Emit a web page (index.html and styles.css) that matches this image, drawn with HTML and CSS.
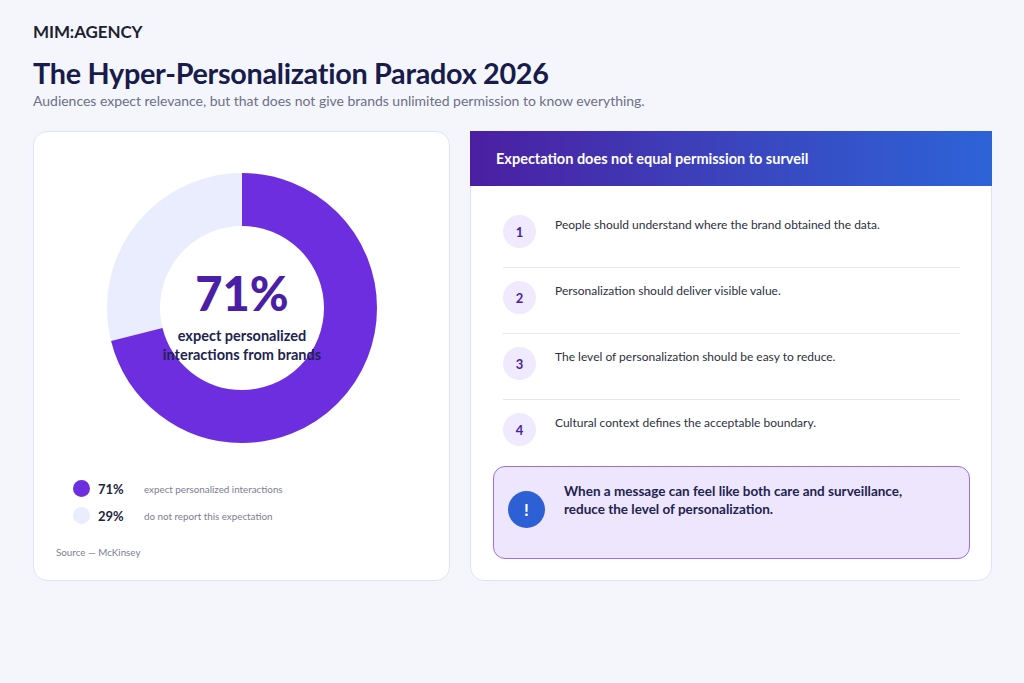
FILE: index.html
```html
<!DOCTYPE html>
<html lang="en">
<head>
<meta charset="utf-8">
<title>The Hyper-Personalization Paradox 2026</title>
<link rel="stylesheet" href="styles.css">
</head>
<body>
<div class="page">
  <div class="logo">MIM:AGENCY</div>
  <h1 class="title">The Hyper-Personalization Paradox 2026</h1>
  <p class="subtitle">Audiences expect relevance, but that does not give brands unlimited permission to know everything.</p>

  <div class="cards">
    <section class="card chart-card">
      <div class="donut-wrap">
        <svg class="donut" viewBox="0 0 270 270" width="270" height="270">
          <circle cx="135" cy="135" r="108.5" fill="none" stroke="#e9edfd" stroke-width="53"/>
          <circle cx="135" cy="135" r="108.5" fill="none" stroke="#6d2ee0" stroke-width="53"
                  stroke-dasharray="484.02 681.73" transform="rotate(-90 135 135)"/>
        </svg>
        <div class="donut-center">
          <div class="big">71%</div>
          <div class="big-label">expect personalized<br>interactions from brands</div>
        </div>
      </div>
      <ul class="legend">
        <li><span class="dot dot-a"></span><span class="pct">71%</span><span class="lbl">expect personalized interactions</span></li>
        <li><span class="dot dot-b"></span><span class="pct">29%</span><span class="lbl">do not report this expectation</span></li>
      </ul>
      <div class="source">Source — McKinsey</div>
    </section>

    <section class="card list-card">
      <header class="list-head">Expectation does not equal permission to surveil</header>
      <ol class="steps">
        <li><span class="num">1</span><span class="step-text">People should understand where the brand obtained the data.</span></li>
        <li><span class="num">2</span><span class="step-text">Personalization should deliver visible value.</span></li>
        <li><span class="num">3</span><span class="step-text">The level of personalization should be easy to reduce.</span></li>
        <li><span class="num">4</span><span class="step-text">Cultural context defines the acceptable boundary.</span></li>
      </ol>
      <div class="callout">
        <span class="alert">!</span>
        <p class="callout-text">When a message can feel like both care and surveillance,<br>reduce the level of personalization.</p>
      </div>
    </section>
  </div>
</div>
</body>
</html>
```

FILE: styles.css
```css
* { box-sizing: border-box; }
html, body { margin: 0; padding: 0; }
body {
  background: #f5f6fb;
  font-family: Lato, "Open Sans", sans-serif;
  color: #1c2150;
  width: 1024px;
  height: 683px;
  overflow: hidden;
}
.page {
  padding: 21px 33px 0 33px;
}
.logo {
  font-size: 17px;
  font-weight: 700;
  color: #1d1f33;
  letter-spacing: -0.1px;
  line-height: 22px;
}
.title {
  margin: 12px 0 0 0;
  font-size: 28.8px;
  line-height: 36px;
  font-weight: 700;
  color: #171c4b;
  letter-spacing: -0.3px;
}
.subtitle {
  margin: 0;
  font-size: 14px;
  line-height: 20px;
  color: #6c7088;
  letter-spacing: -0.02px;
}
.cards {
  margin-top: 20px;
  display: grid;
  grid-template-columns: 417px 522px;
  gap: 20px;
  height: 450px;
}
.card {
  background: #fff;
  border: 1px solid #dfe3f6;
  border-radius: 14px;
}
.chart-card {
  padding: 41px 22px 0 22px;
  display: flex;
  flex-direction: column;
}
.donut-wrap {
  position: relative;
  width: 270px;
  height: 270px;
  margin: 0 0 0 51px;
}
.donut { display: block; }
.donut-center {
  position: absolute;
  inset: 0;
  display: flex;
  flex-direction: column;
  align-items: center;
  justify-content: center;
  text-align: center;
  padding-top: 15px;
}
.big {
  font-size: 47px;
  line-height: 50px;
  font-weight: 900;
  color: #4b1ea6;
}
.big-label {
  margin-top: 8px;
  font-size: 14.5px;
  line-height: 19px;
  font-weight: 700;
  color: #1e2350;
}
.legend {
  list-style: none;
  margin: 37px 0 0 17px;
  padding: 0;
  display: flex;
  flex-direction: column;
  gap: 10px;
}
.legend li {
  display: flex;
  align-items: center;
  height: 17px;
}
.dot {
  width: 17px;
  height: 17px;
  border-radius: 50%;
  margin-right: 8px;
  flex: none;
}
.dot-a { background: #6d2ee0; }
.dot-b { background: #e9edfd; }
.pct {
  font-size: 13px;
  font-weight: 700;
  color: #22253a;
  width: 46px;
}
.lbl {
  font-size: 9.8px;
  color: #7b7e92;
}
.source {
  margin-top: 22px;
  font-size: 9.8px;
  color: #7b7e92;
}
.list-card {
  border-radius: 0 0 14px 14px;
  display: flex;
  flex-direction: column;
  padding: 0 21px 0 22px;
}
.list-head {
  margin: -1px -22px 0 -23px;
  height: 55px;
  padding: 0 26px;
  display: flex;
  align-items: center;
  background: linear-gradient(90deg, #4b1fa1 0%, #3b44bd 50%, #2d63d7 100%);
  color: #fff;
  font-size: 14.5px;
  font-weight: 700;
}
.steps {
  list-style: none;
  margin: 0;
  padding: 29px 10px 0 10px;
}
.steps li {
  display: flex;
  align-items: flex-start;
  border-bottom: 1px solid #e2e5f4;
}
.steps li:nth-child(1) { height: 53px; }
.steps li:nth-child(n+2) { padding-top: 13px; height: 66px; }
.steps li:last-child { border-bottom: none; }
.num {
  width: 33px;
  height: 33px;
  border-radius: 50%;
  background: #efeafd;
  color: #4b1ea6;
  font-size: 13px;
  font-weight: 700;
  display: flex;
  align-items: center;
  justify-content: center;
  flex: none;
  margin-right: 19px;
}
.step-text {
  font-size: 12px;
  line-height: 16px;
  color: #2d2f40;
  padding-top: 2px;
}
.callout {
  height: 93px;
  background: #ede6fd;
  border: 1.5px solid #9c6fe9;
  border-radius: 12px;
  display: flex;
  align-items: flex-start;
  padding: 15px 20px 0 14px;
}
.alert {
  width: 37px;
  height: 37px;
  border-radius: 50%;
  background: #2d5fd5;
  color: #fff;
  font-size: 17px;
  font-weight: 700;
  display: flex;
  align-items: center;
  justify-content: center;
  flex: none;
  margin-right: 19px;
  margin-top: 9px;
}
.callout-text {
  margin: 0;
  font-size: 13.5px;
  line-height: 18px;
  font-weight: 700;
  color: #1e2350;
}
```
